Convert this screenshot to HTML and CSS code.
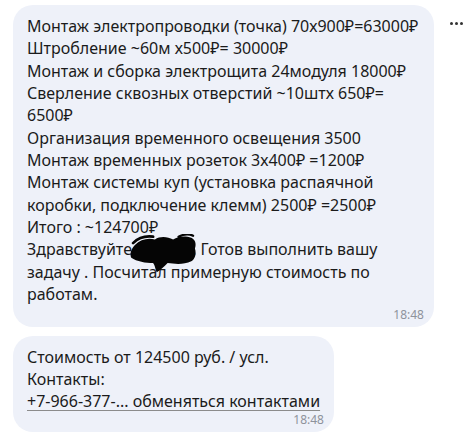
FILE: index.html
```html
<!DOCTYPE html>
<html lang="ru">
<head>
<meta charset="utf-8">
<link rel="stylesheet" href="styles.css">
</head>
<body>
<div class="chat">
  <div class="row">
    <div class="bubble bubble-wide">
      <div class="text">
        <div class="line">Монтаж электропроводки (точка) 70х900₽=63000₽</div>
        <div class="line">Штробление ~60м х500₽= 30000₽</div>
        <div class="line">Монтаж и сборка электрощита 24модуля 18000₽</div>
        <div class="line">Сверление сквозных отверстий ~10штх 650₽=</div>
        <div class="line">6500₽</div>
        <div class="line">Организация временного освещения 3500</div>
        <div class="line">Монтаж временных розеток 3х400₽ =1200₽</div>
        <div class="line">Монтаж системы куп (установка распаячной</div>
        <div class="line">коробки, подключение клемм) 2500₽ =2500₽</div>
        <div class="line">Итого : ~124700₽</div>
        <div class="line">Здравствуйте<span class="hidden-name"><svg class="scribble" viewBox="0 0 80 44" width="74" height="40"><path d="M8 12 C14 6 22 4 30 6 C36 2 44 3 50 6 C56 2 64 2 70 4 C74 6 76 10 74 16 C76 22 74 28 70 30 C62 34 52 33 44 32 C40 36 36 40 32 42 C30 38 30 34 28 32 C20 32 10 30 4 26 C2 22 4 16 8 12 Z" fill="#050505"/><path d="M6 10 C12 4 20 2 28 3" stroke="#050505" stroke-width="3" fill="none" stroke-linecap="round"/><path d="M56 3 C62 0 68 0 72 2" stroke="#050505" stroke-width="2.5" fill="none" stroke-linecap="round"/></svg></span>. Готов выполнить вашу</div>
        <div class="line">задачу . Посчитал примерную стоимость по</div>
        <div class="line">работам.</div>
      </div>
      <div class="time">18:48</div>
    </div>
    <div class="more"><span></span><span></span><span></span></div>
  </div>
  <div class="row">
    <div class="bubble bubble-narrow">
      <div class="text text-compact">
        <div class="line">Стоимость от 124500 руб. / усл.</div>
        <div class="line">Контакты:</div>
        <div class="line"><a class="link" href="#">+7-966-377-... обменяться контактами</a></div>
      </div>
      <div class="time time-tight">18:48</div>
    </div>
  </div>
</div>
</body>
</html>
```
FILE: styles.css
```css
html, body {
  margin: 0;
  padding: 0;
  background: #ffffff;
}
body {
  font-family: "Noto Sans", "Open Sans", "DejaVu Sans", sans-serif;
  color: #1b1b1b;
}
.chat {
  display: flex;
  flex-direction: column;
  gap: 9px;
  padding: 5px 0 0 13px;
}
.row {
  display: flex;
  align-items: flex-start;
  gap: 16px;
}
.bubble {
  background: #eef1f9;
  border-radius: 20px;
  padding: 10px 10px 7px 14px;
  box-sizing: border-box;
}
.bubble-wide {
  width: 421px;
}
.bubble-narrow {
  width: 321px;
}
.text {
  font-size: 16px;
  line-height: 22.33px;
}
.text-compact {
  line-height: 22px;
}
.line {
  white-space: nowrap;
}
.hidden-name {
  position: relative;
  display: inline-block;
  width: 60px;
  height: 1px;
}
.scribble {
  position: absolute;
  left: -5px;
  top: -20px;
}
.link {
  color: #1b1b1b;
  text-decoration: underline;
  text-decoration-color: #8c8c8c;
  text-underline-offset: 3px;
}
.time {
  text-align: right;
  font-size: 12px;
  line-height: 11px;
  color: #8e939c;
  margin-top: 4px;
}
.time-tight {
  margin-top: 2px;
}
.more {
  display: flex;
  gap: 2px;
  padding-top: 17px;
}
.more span {
  width: 3px;
  height: 3px;
  border-radius: 50%;
  background: #333333;
}
```
